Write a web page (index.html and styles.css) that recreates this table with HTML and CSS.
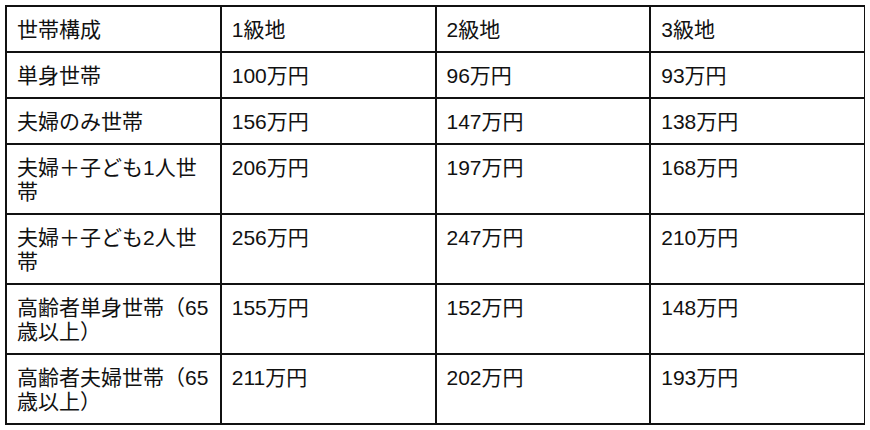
FILE: index.html
```html
<!DOCTYPE html>
<html lang="ja">
<head>
<meta charset="utf-8">
<title>世帯構成別 基準額</title>
<link rel="stylesheet" href="styles.css">
</head>
<body>
<table class="grid">
  <tbody>
    <tr><td>世帯構成</td><td>1級地</td><td>2級地</td><td>3級地</td></tr>
    <tr><td>単身世帯</td><td>100万円</td><td>96万円</td><td>93万円</td></tr>
    <tr><td>夫婦のみ世帯</td><td>156万円</td><td>147万円</td><td>138万円</td></tr>
    <tr><td>夫婦＋子ども1人世帯</td><td>206万円</td><td>197万円</td><td>168万円</td></tr>
    <tr><td>夫婦＋子ども2人世帯</td><td>256万円</td><td>247万円</td><td>210万円</td></tr>
    <tr><td>高齢者単身世帯（65歳以上）</td><td>155万円</td><td>152万円</td><td>148万円</td></tr>
    <tr><td>高齢者夫婦世帯（65歳以上）</td><td>211万円</td><td>202万円</td><td>193万円</td></tr>
  </tbody>
</table>
</body>
</html>
```
FILE: styles.css
```css
html, body {
  background: #ffffff;
}
body {
  margin: 5px;
  font-family: "Liberation Sans", Arial, "Noto Sans CJK JP", sans-serif;
  font-size: 21px;
  line-height: 24px;
  color: #111111;
}
.grid {
  width: 861px;
  table-layout: fixed;
  border-collapse: collapse;
  border: 2px solid #111111;
}
.grid td {
  border: 2px solid #111111;
  padding: 11px 10px 9px;
  vertical-align: top;
  text-align: left;
}
```
